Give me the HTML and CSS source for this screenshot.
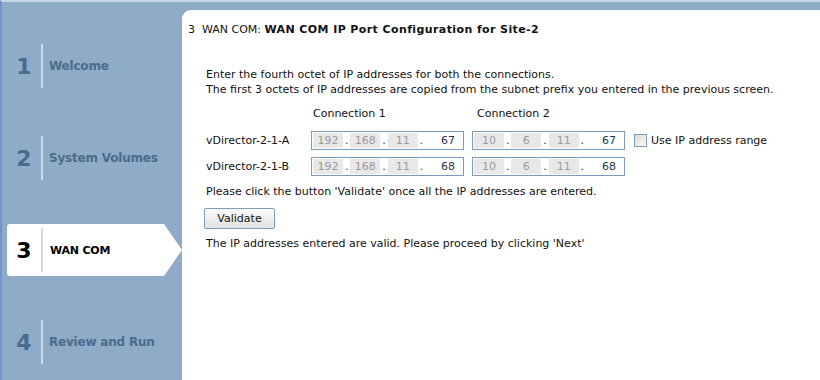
FILE: index.html
```html
<!DOCTYPE html>
<html lang="en">
<head>
<meta charset="UTF-8">
<title>WAN COM IP Port Configuration</title>
<link rel="stylesheet" href="styles.css">
</head>
<body>
<div class="wizard">
<div class="steps">
<div class="step">
<div class="step-box">
<div class="step-num">1</div>
<div class="step-label">Welcome</div>
</div>
</div>
<div class="step">
<div class="step-box">
<div class="step-num">2</div>
<div class="step-label">System Volumes</div>
</div>
</div>
<div class="step active">
<div class="step-box">
<div class="step-num">3</div>
<div class="step-label">WAN COM</div>
</div>
</div>
<div class="step">
<div class="step-box">
<div class="step-num">4</div>
<div class="step-label">Review and Run</div>
</div>
</div>
</div>
<div class="panel">
<div class="panel-title">3&nbsp; WAN COM: <b>WAN COM IP Port Configuration for Site-2</b></div>
<div class="panel-body">
<p class="intro">Enter the fourth octet of IP addresses for both the connections.<br>The first 3 octets of IP addresses are copied from the subnet prefix you entered in the previous screen.</p>
<div class="ip-grid">
<div></div>
<div class="col-head">Connection 1</div>
<div class="col-head">Connection 2</div>
<div></div>

<div class="host">vDirector-2-1-A</div>
<div class="ip"><span class="oct">192</span><span class="dot">.</span><span class="oct">168</span><span class="dot">.</span><span class="oct">11</span><span class="dot">.</span><span class="oct last">67</span></div>
<div class="ip"><span class="oct">10</span><span class="dot">.</span><span class="oct">6</span><span class="dot">.</span><span class="oct">11</span><span class="dot">.</span><span class="oct last">67</span></div>
<label class="range"><span class="check"></span>Use IP address range</label>

<div class="host">vDirector-2-1-B</div>
<div class="ip"><span class="oct">192</span><span class="dot">.</span><span class="oct">168</span><span class="dot">.</span><span class="oct">11</span><span class="dot">.</span><span class="oct last">68</span></div>
<div class="ip"><span class="oct">10</span><span class="dot">.</span><span class="oct">6</span><span class="dot">.</span><span class="oct">11</span><span class="dot">.</span><span class="oct last">68</span></div>
<div></div>
</div>
<p class="note">Please click the button 'Validate' once all the IP addresses are entered.</p>
<button class="btn">Validate</button>
<p class="result">The IP addresses entered are valid. Please proceed by clicking 'Next'</p>
</div>
</div>
</div>
</body>
</html>
```

FILE: styles.css
```css
html,body{
margin:0px;
padding:0px;
width:100%;
height:100%;
overflow:hidden;
}
*{font-family:"DejaVu Sans",sans-serif;}
body{
background:#8eabc7;
border-top:2px solid #c6d7e8;
border-left:2px solid #7494cf;
box-sizing:border-box;
color:#111;
font-size:11px;
}
.wizard{
display:flex;
height:100%;
}
.steps{
width:180px;
min-width:180px;
padding-top:18px;
padding-left:5px;
box-sizing:border-box;
display:flex;
flex-direction:column;
}
.step{
height:92px;
flex-shrink:0;
display:flex;
align-items:center;
}
.step-box{
width:175px;
height:52px;
display:flex;
align-items:center;
box-sizing:border-box;
}
.step-num{
width:34px;
text-align:center;
font-size:22px;
font-weight:bold;
color:#4a6b8c;
}
.step-label{
height:44px;
display:flex;
align-items:center;
padding-left:6px;
border-left:2px solid #d3d9e0;
font-size:12px;
font-weight:bold;
letter-spacing:-0.2px;
color:#4a6b8c;
}
.step.active .step-box{
background:#fff;
border-radius:3px 0 0 3px;
clip-path:polygon(0 0,157px 0,100% 50%,157px 100%,0 100%);
}
.step.active .step-num{color:#000;}
.step.active .step-label{
color:#000;
font-size:11px;
padding-left:7px;
}
.panel{
flex-grow:1;
margin-top:8px;
background:#fff;
border-top-left-radius:9px;
padding:12px 0 0 6px;
}
.panel-title{
line-height:15px;
}
.panel-title b{letter-spacing:0.4px;}
.panel-body{
padding-left:18px;
}
.panel-body p{
margin:0px;
line-height:15px;
}
.intro{
padding-top:30px;
}
.ip-grid{
display:grid;
grid-template-columns:105px 161px 162px auto;
row-gap:7px;
align-items:center;
margin-top:9px;
}
.col-head{
padding-left:2px;
line-height:15px;
margin-bottom:3px;
}
.col-head + .col-head{padding-left:5px;}
.host{line-height:19px;}
.ip{
width:153px;
height:19px;
box-sizing:border-box;
border:1px solid #7d9bb8;
padding:1px;
display:flex;
background:#fff;
}
.oct{
width:32px;
background:#e8e8e8;
color:#9a9a9a;
text-align:center;
line-height:15px;
}
.dot{
width:8px;
text-align:center;
line-height:15px;
color:#333;
}
.oct.last{
flex-grow:1;
background:#fff;
color:#1c3a4c;
text-align:right;
padding-right:7px;
}
.range{
display:flex;
align-items:center;
gap:4px;
}
.check{
width:13px;
height:13px;
box-sizing:border-box;
border:1px solid #7d9bb8;
background:linear-gradient(135deg,#dcdcdc,#f8f8f8);
}
.note{margin-top:8px !important;}
.btn{
display:block;
margin:9px 0 0 -2px;
width:71px;
height:21px;
padding:0px;
font-size:11px;
color:#111;
border:1px solid #7f9db9;
border-radius:2px;
background:linear-gradient(#fbfbfb,#e2e2e2);
}
.result{margin-top:7px !important;}
```
